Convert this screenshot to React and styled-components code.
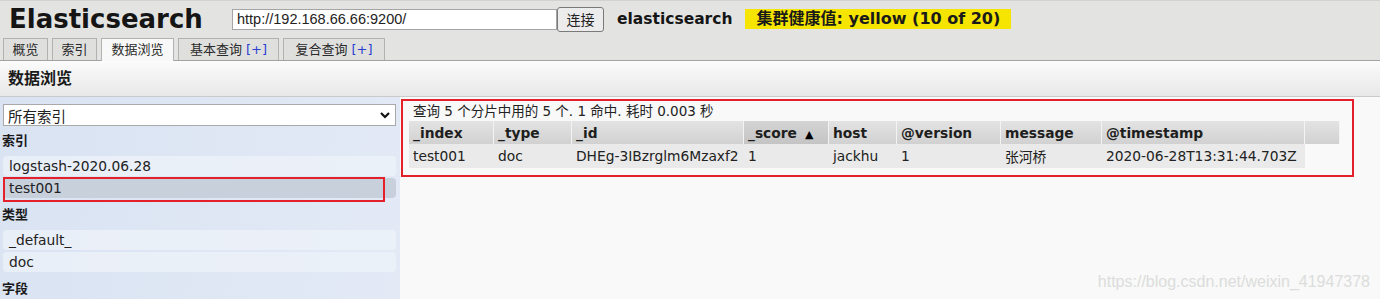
import React from 'react';
import styled, { createGlobalStyle } from 'styled-components';

const GlobalStyle = createGlobalStyle`
  html, body {
    margin: 0;
    padding: 0;
  }
  body {
    font-family: "DejaVu Sans", "Noto Sans CJK SC", sans-serif;
    font-size: 13px;
    color: #222;
    background: #f8f9f8;
  }
`;

const Page = styled.div`
  position: relative;
  width: 1380px;
  height: 299px;
  overflow: hidden;
  background: #f8f9f8;
`;

const Header = styled.div`
  background: #e3e4e2;
  border-top: 1px solid #d2d3d1;
  border-bottom: 1px solid #a3a3a3;
  height: 61px;
  box-sizing: border-box;
`;

const TopRow = styled.div`
  display: flex;
  align-items: center;
  height: 36px;
  padding-left: 9px;
`;

const Title = styled.div`
  font-weight: bold;
  font-size: 26px;
  color: #151515;
  width: 223px;
`;

const UrlInput = styled.div`
  width: 325px;
  height: 21px;
  box-sizing: border-box;
  border: 1px solid #a5a5a5;
  background: #fff;
  font-family: "Liberation Sans", sans-serif;
  font-size: 14.5px;
  line-height: 19px;
  padding-left: 4px;
`;

const ConnectButton = styled.button`
  height: 25px;
  width: 47px;
  padding: 0;
  border: 1px solid #7a7a7a;
  border-radius: 3px;
  background: #ececec;
  font-family: "Noto Sans CJK SC", sans-serif;
  font-size: 14px;
  color: #222;
`;

const ClusterName = styled.div`
  font-weight: bold;
  font-size: 15.5px;
  margin-left: 13px;
  color: #151515;
`;

const Health = styled.div`
  margin-left: 12px;
  background: #f6e500;
  font-weight: bold;
  font-size: 16px;
  height: 20px;
  line-height: 20px;
  padding: 0 11px 0 12px;
  color: #1a1a1a;
`;

const Tabs = styled.div`
  display: flex;
  gap: 4px;
  padding-left: 3px;
  margin-top: 1px;
  height: 22px;
`;

const Tab = styled.div`
  position: relative;
  box-sizing: border-box;
  height: ${p => (p.$active ? '23px' : '22px')};
  width: ${p => p.$w}px;
  border: 1px solid #b2b2b2;
  border-bottom: none;
  background: ${p => (p.$active ? '#f7f8f7' : '#dfe0de')};
  font-size: 13px;
  line-height: 22px;
  text-align: center;
  color: #2a2a2a;
  z-index: 1;
`;

const Plus = styled.span`
  color: #2a3fd0;
`;

const SectionHeader = styled.div`
  height: 36px;
  box-sizing: border-box;
  background: linear-gradient(#fafbfa, #e7e8e7);
  border-bottom: 1px solid #c9cac9;
  font-weight: bold;
  font-size: 16px;
  line-height: 36px;
  padding-left: 8px;
  color: #1a1a1a;
`;

const Main = styled.div`
  display: flex;
`;

const Sidebar = styled.div`
  width: 400px;
  height: 210px;
  box-sizing: border-box;
  padding: 7px 4px 0 3px;
  background: linear-gradient(100deg, #d9e3f2, #e3eaf6);
`;

const SelectBox = styled.div`
  display: flex;
  align-items: center;
  justify-content: space-between;
  height: 22px;
  box-sizing: border-box;
  border: 1px solid #a9a9a9;
  background: #fff;
  padding: 0 4px 0 4px;
  font-size: 14.5px;
  color: #222;
`;

const SideLabel = styled.div`
  height: 30px;
  line-height: 30px;
  font-weight: bold;
  font-size: 13px;
  margin-left: -1px;
  color: #1a1a1a;
`;

const Item = styled.div`
  position: relative;
  height: 20px;
  line-height: 20px;
  margin-bottom: 2px;
  padding-left: 6px;
  border-radius: 4px;
  background: ${p => (p.$selected ? '#c8d0dc' : 'rgba(240, 244, 250, 0.7)')};
  font-size: 13.8px;
  color: #222;

  ${p =>
    p.$marked &&
    `
    &::after {
      content: '';
      position: absolute;
      left: 0;
      top: -1px;
      width: 382px;
      height: 25px;
      box-sizing: border-box;
      border: 2px solid #e4212b;
    }
  `}
`;

const Content = styled.div`
  flex: 1;
  padding: 2px 0 0 1px;
`;

const Results = styled.div`
  width: 953px;
  height: 78px;
  box-sizing: border-box;
  border: 2px solid #e4212b;
  padding: 3px 6px 0 6px;
`;

const Info = styled.div`
  font-size: 13.5px;
  height: 17px;
  line-height: 14px;
  padding-left: 4px;
  color: #222;
`;

const Table = styled.table`
  border-collapse: separate;
  border-spacing: 0;
  font-size: 13.8px;
  table-layout: fixed;
`;

const Th = styled.th`
  width: ${p => p.$w}px;
  box-sizing: border-box;
  height: 23px;
  padding: 0 4px;
  text-align: left;
  font-weight: bold;
  background: ${p =>
    p.$sorted
      ? 'linear-gradient(#d3d4d3, #c3c4c3)'
      : 'linear-gradient(#e2e3e2, #d0d1d0)'};
  border-right: 1px solid #f2f3f2;
  color: #1e1e1e;
  white-space: nowrap;
`;

const Td = styled.td`
  height: 24px;
  padding: 0 4px;
  background: ${p => (p.$blank ? 'transparent' : '#e9eae9')};
  white-space: nowrap;
  overflow: hidden;
  color: #222;
`;

const Arrow = styled.span`
  font-size: 11px;
  margin-left: 8px;
  color: #000;
`;

const Watermark = styled.div`
  position: absolute;
  right: 10px;
  bottom: 8px;
  font-family: "Liberation Sans", sans-serif;
  font-size: 16px;
  color: #dcdddc;
`;

const Chevron = () => (
  <svg width="12" height="12" viewBox="0 0 12 12">
    <path d="M2 4 L6 8 L10 4" fill="none" stroke="#111" strokeWidth="2.2" />
  </svg>
);

const columns = [
  { name: '_index', w: 85 },
  { name: '_type', w: 78 },
  { name: '_id', w: 172 },
  { name: '_score', w: 85, sorted: true },
  { name: 'host', w: 68 },
  { name: '@version', w: 104 },
  { name: 'message', w: 101 },
  { name: '@timestamp', w: 203 },
  { name: '', w: 35 },
];

const row = ['test001', 'doc', 'DHEg-3IBzrglm6Mzaxf2', '1', 'jackhu', '1', '张河桥', '2020-06-28T13:31:44.703Z'];

const App = () => {
  return (
    <Page>
      <GlobalStyle />
      <Header>
        <TopRow>
          <Title>Elasticsearch</Title>
          <UrlInput>http://192.168.66.66:9200/</UrlInput>
          <ConnectButton>连接</ConnectButton>
          <ClusterName>elasticsearch</ClusterName>
          <Health>集群健康值: yellow (10 of 20)</Health>
        </TopRow>
        <Tabs>
          <Tab $w={45}>概览</Tab>
          <Tab $w={45}>索引</Tab>
          <Tab $w={73} $active>数据浏览</Tab>
          <Tab $w={101}>基本查询 <Plus>[+]</Plus></Tab>
          <Tab $w={102}>复合查询 <Plus>[+]</Plus></Tab>
        </Tabs>
      </Header>
      <SectionHeader>数据浏览</SectionHeader>
      <Main>
        <Sidebar>
          <SelectBox>
            <span>所有索引</span>
            <Chevron />
          </SelectBox>
          <SideLabel>索引</SideLabel>
          <Item>logstash-2020.06.28</Item>
          <Item $selected $marked>test001</Item>
          <SideLabel>类型</SideLabel>
          <Item>_default_</Item>
          <Item>doc</Item>
          <SideLabel>字段</SideLabel>
        </Sidebar>
        <Content>
          <Results>
            <Info>查询 5 个分片中用的 5 个. 1 命中. 耗时 0.003 秒</Info>
            <Table>
              <thead>
                <tr>
                  {columns.map(c => (
                    <Th key={c.name || 'blank'} $w={c.w} $sorted={c.sorted}>
                      {c.name}
                      {c.sorted && <Arrow>▲</Arrow>}
                    </Th>
                  ))}
                </tr>
              </thead>
              <tbody>
                <tr>
                  {row.map((v, i) => (
                    <Td key={i}>{v}</Td>
                  ))}
                  <Td $blank />
                </tr>
              </tbody>
            </Table>
          </Results>
        </Content>
      </Main>
      <Watermark>https://blog.csdn.net/weixin_41947378</Watermark>
    </Page>
  );
};

export default App;
